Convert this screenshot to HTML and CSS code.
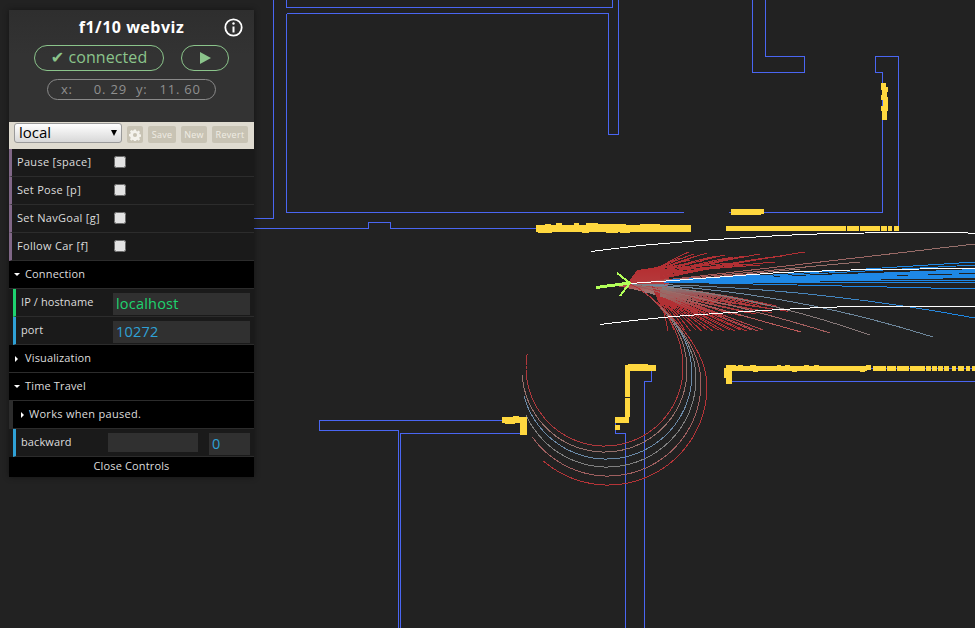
FILE: index.html
```html
<!DOCTYPE html>
<html lang="en">
<head>
<meta charset="utf-8">
<title>f1/10 webviz</title>
<link rel="stylesheet" href="styles.css">
</head>
<body>
<svg class="map" width="975" height="628" viewBox="0 0 975 628">
  <defs>
    <linearGradient id="blobFill" x1="0" y1="0" x2="0" y2="1">
      <stop offset="0" stop-color="#b52d30"/>
      <stop offset=".55" stop-color="#b53a3c"/>
      <stop offset=".8" stop-color="#a8706c"/>
      <stop offset="1" stop-color="#8a8080"/>
    </linearGradient>
  </defs>
  <g class="walls">
    <path d="M273.5 0V218.5H254"/>
    <path d="M286.5 0V7.5H612.5V0"/>
    <path d="M287 13.5H608.5V134.5H618.5V0"/>
    <path d="M286.5 14V212.5H684"/>
    <path d="M254 228.5H368.5V222.5H390.5V228.5H540"/>
    <path d="M729 212.5H882.5V72.5H875.5V56.5H898.5V229"/>
    <path d="M752.5 0V72.5H804.5V56.5H765.5V0"/>
    <path d="M505 420.5H319.5V430.5H398.5V628"/>
    <path d="M400.5 628V433.5H522"/>
    <path d="M615.5 422V433.5H625.5V628"/>
    <path d="M644.5 628V381.5H651.5V370"/>
    <path d="M730 381.5H975"/>
    <path d="M860 368.5H975"/>
  </g>
  <polygon class="blob" points="610,285 628,283 637,270 652,268 660,266 668,272 670,281 666,292 660,297 648,293 636,290 622,287"/>
  <g id="fan" class="fan"></g>
  <g class="yellow">
    <rect x="536" y="225" width="155" height="7"/>
    <rect x="538" y="232" width="14" height="1"/><rect x="545" y="224" width="6" height="1"/>
    <rect x="556" y="223" width="6" height="2"/><rect x="574" y="223" width="5" height="2"/>
    <rect x="582" y="232" width="7" height="1"/><rect x="590" y="224" width="36" height="2"/>
    <rect x="586" y="223" width="12" height="2"/><rect x="606" y="232" width="12" height="1"/>
    <rect x="620" y="232" width="10" height="1"/><rect x="640" y="224" width="20" height="1"/>
    <rect x="731" y="209" width="30" height="6"/><rect x="758" y="209" width="6" height="5"/>
    <rect x="726" y="226" width="120" height="5"/><rect x="847" y="226" width="12" height="5"/>
    <rect x="860" y="226" width="20" height="5"/><rect x="881" y="226" width="6" height="5"/>
    <rect x="888" y="226" width="4" height="5"/><rect x="894" y="226" width="5" height="5"/>
    <rect x="881" y="83" width="5" height="7"/><rect x="882" y="87" width="6" height="5"/>
    <rect x="882" y="92" width="5" height="3"/><rect x="881" y="95" width="6" height="5"/>
    <rect x="883" y="97" width="5" height="9"/><rect x="881" y="106" width="7" height="5"/>
    <rect x="882" y="111" width="5" height="9"/>
    <rect x="724" y="368" width="8" height="10"/><rect x="726" y="378" width="6" height="6"/>
    <rect x="726" y="365" width="10" height="5"/><rect x="732" y="366" width="135" height="5"/>
    <rect x="738" y="365" width="5" height="2"/><rect x="750" y="365" width="6" height="2"/>
    <rect x="753" y="371" width="5" height="1"/><rect x="777" y="365" width="4" height="2"/>
    <rect x="785" y="365" width="5" height="2"/><rect x="792" y="371" width="5" height="1"/>
    <rect x="804" y="365" width="5" height="2"/><rect x="814" y="365" width="5" height="2"/>
    <rect x="860" y="371" width="5" height="1"/><rect x="866" y="365" width="5" height="5"/>
    <rect x="873" y="366" width="13" height="5"/><rect x="887" y="366" width="9" height="5"/>
    <rect x="897" y="366" width="12" height="5"/><rect x="910" y="366" width="15" height="5"/>
    <rect x="926" y="366" width="5" height="5"/><rect x="932" y="366" width="5" height="5"/>
    <rect x="938" y="366" width="5" height="5"/><rect x="944" y="366" width="5" height="5"/>
    <rect x="952" y="366" width="4" height="5"/><rect x="958" y="366" width="6" height="5"/>
    <rect x="966" y="366" width="4" height="5"/><rect x="972" y="366" width="3" height="5"/>
    <rect x="625" y="365" width="5" height="32"/><rect x="625" y="398" width="5" height="19"/>
    <rect x="625" y="365" width="31" height="6"/><rect x="628" y="364" width="20" height="2"/>
    <rect x="615" y="417" width="14" height="6"/><rect x="615" y="425" width="5" height="5"/>
    <rect x="502" y="417" width="25" height="6"/><rect x="505" y="423" width="10" height="1"/>
    <rect x="513" y="416" width="6" height="2"/><rect x="520" y="418" width="7" height="17"/>
  </g>
  <g class="bounds">
    <polyline points="591,251.500 640,245.500 700,240.500 780,235.500 830,233.500 900,232.500 960,232.500 975,233.500"/>
    <polyline points="600,324.500 633,320.500 673,316.500 730,312.500 780,309.500 820,307.500 855,306.500 975,306.500"/>
    <polyline points="630,283.500 673,280.500 780,272.500 865,269.500 975,268.500"/>
  </g>
  <g class="arrow">
    <path class="shaft" d="M596 287.500L630 283"/>
    <path d="M617 273L630 283L620 296"/>
  </g>
</svg>

<main class="panel">
  <header class="head">
    <h1 class="title">f1/10 webviz</h1>
    <svg class="info" width="19" height="19" viewBox="0 0 19 19">
      <circle cx="9.5" cy="9.5" r="8.2"/>
      <path d="M9.5 8.5V14.5"/>
      <circle class="dot" cx="9.5" cy="5.5" r="1.2"/>
    </svg>
    <div class="pills">
      <div class="pill pill-conn">✔ connected</div>
      <div class="pill pill-play">
        <svg width="13" height="14" viewBox="0 0 13 14"><path d="M1 1L12 7L1 13Z"/></svg>
      </div>
    </div>
    <div class="coords"><span class="c-x">x:</span><span class="c-xv">0. 29</span><span class="c-y">y:</span><span class="c-yv">11. 60</span></div>
  </header>

  <div class="presets">
    <div class="select-wrap"><select class="preset-select"><option>local</option></select></div>
    <button class="btn btn-gear" aria-label="settings">
      <svg width="12" height="12" viewBox="0 0 14 14">
        <path d="M5.8 0.500h2.400l.3 1.800 1.200.5 1.500-1 1.700 1.700-1 1.500.5 1.200 1.800.3v2.400l-1.800.3-.5 1.200 1 1.500-1.700 1.700-1.500-1-1.200.5-.3 1.800H5.800l-.3-1.800-1.200-.5-1.500 1-1.700-1.700 1-1.500-.5-1.200L-.2 8.200v-2.400l1.800-.3.5-1.200-1-1.500 1.700-1.700 1.500 1 1.200-.5z"/>
        <circle class="hole" cx="7" cy="7" r="2.400"/>
      </svg>
    </button>
    <button class="btn btn-save">Save</button>
    <button class="btn btn-new">New</button>
    <button class="btn btn-revert">Revert</button>
  </div>

  <ul class="rows">
    <li class="row row-bool"><span class="label">Pause [space]</span><input class="check" type="checkbox"></li>
    <li class="row row-bool"><span class="label">Set Pose [p]</span><input class="check" type="checkbox"></li>
    <li class="row row-bool"><span class="label">Set NavGoal [g]</span><input class="check" type="checkbox"></li>
    <li class="row row-bool"><span class="label">Follow Car [f]</span><input class="check" type="checkbox"></li>
    <li class="row folder open">Connection</li>
    <li class="nested">
      <ul class="rows">
        <li class="row row-field row-green"><span class="label">IP / hostname</span><input class="field field-green" type="text" value="localhost"></li>
        <li class="row row-field row-blue"><span class="label">port</span><input class="field field-blue" type="text" value="10272"></li>
      </ul>
    </li>
    <li class="row folder">Visualization</li>
    <li class="row folder open">Time Travel</li>
    <li class="nested">
      <ul class="rows">
        <li class="row folder sub">Works when paused.</li>
        <li class="row row-field row-blue row-slider"><span class="label label-short">backward</span><span class="slider"></span><input class="field field-blue field-num" type="text" value="0"></li>
      </ul>
    </li>
  </ul>
  <div class="close">Close Controls</div>
</main>
<script src="script.js"></script>
</body>
</html>
```

FILE: styles.css
```css
* { box-sizing: border-box; }
html, body { height: 100%; }
body {
  margin: 0;
  padding: 10px 0 0 9px;
  background: #222;
  overflow: hidden;
  font-family: "Open Sans", "DejaVu Sans", sans-serif;
}
ul { list-style: none; margin: 0; padding: 0; }

.map { position: absolute; left: 0; top: 0; shape-rendering: crispEdges; }
.walls path { fill: none; stroke: #4a66f2; stroke-width: 1; }
.yellow rect { fill: #ffd83f; }
.bounds polyline { fill: none; stroke: #fff; stroke-width: 1; }
.arrow path { fill: none; stroke: #b2ff59; stroke-width: 2; }
.arrow .shaft { stroke-width: 3; }
.fan path { fill: none; }
.blob { fill: url(#blobFill); }

.panel {
  position: relative;
  width: 245px;
  box-shadow: 0 0 6px rgba(0, 0, 0, .45);
  color: #eee;
  font-size: 11px;
  letter-spacing: .3px;
}

.head {
  position: relative;
  height: 112px;
  padding-top: 6px;
  background: linear-gradient(#2e2e2e, #333 40%);
  display: flex;
  flex-direction: column;
  align-items: center;
}
.title {
  margin: 0;
  height: 23px;
  line-height: 23px;
  font-size: 16px;
  font-weight: 700;
  letter-spacing: .5px;
  color: #fff;
}
.info { position: absolute; left: 215px; top: 8px; }
.info circle { fill: none; stroke: #fff; stroke-width: 1.8; shape-rendering: geometricPrecision; }
.info path { stroke: #fff; stroke-width: 2; fill: none; }
.info .dot { fill: #fff; stroke: none; }

.pills { display: flex; gap: 17px; margin-top: 6px; }
.pill {
  height: 26px;
  border: 1px solid #8bc48b;
  border-radius: 13px;
  display: flex;
  align-items: center;
  justify-content: center;
  color: #8bc48b;
}
.pill-conn { width: 130px; font-size: 16px; letter-spacing: .1px; padding-bottom: 2px; }
.pill-play { width: 48px; }
.pill-play path { fill: #8bc48b; shape-rendering: geometricPrecision; }

.coords {
  width: 169px;
  height: 21px;
  margin-top: 8px;
  border: 1px solid #8a8a8a;
  border-radius: 11px;
  color: #8f8f8f;
  font-size: 13px;
  letter-spacing: .8px;
  line-height: 19px;
  display: flex;
  white-space: pre;
}
.c-x { margin-left: 13px; }
.c-xv { margin-left: 21px; }
.c-y { margin-left: 9px; }
.c-yv { margin-left: 12px; }

.presets {
  height: 27px;
  background: #dfdbd0;
  padding: 1px 5px 0;
  display: flex;
  align-items: flex-start;
}
.select-wrap { position: relative; width: 108px; height: 20px; }
.select-wrap::after {
  content: "";
  position: absolute;
  right: 5px;
  top: 7px;
  border-style: solid;
  border-color: #000 transparent transparent transparent;
  border-width: 6px 3.5px 0 3.5px;
}
.preset-select {
  appearance: none;
  display: block;
  width: 100%;
  height: 100%;
  border: 1px solid #9a9a9a;
  border-radius: 3px;
  background: linear-gradient(#fff, #d8d8d8);
  font-family: "Open Sans", "DejaVu Sans", sans-serif;
  font-size: 15px;
  line-height: 16px;
  color: #000;
  padding: 0 0 2px 4px;
}
.btn {
  height: 17px;
  margin-top: 3px;
  padding: 0;
  border: 0;
  border-radius: 2px;
  background: #c8c3b4;
  color: #f0ede4;
  font-family: inherit;
  font-size: 9px;
  letter-spacing: .3px;
  display: flex;
  align-items: center;
  justify-content: center;
}
.btn-gear { width: 16px; margin-left: 5px; }
.btn-gear path { fill: #f4f2ec; shape-rendering: geometricPrecision; }
.btn-gear .hole { fill: #c8c3b4; shape-rendering: geometricPrecision; }
.btn-save { width: 28px; margin-left: 5px; }
.btn-new { width: 26px; margin-left: 5px; }
.btn-revert { width: 36px; margin-left: 5px; }

.row {
  height: 28px;
  background: #1a1a1a;
  border-bottom: 1px solid #2c2c2c;
  display: flex;
  align-items: center;
  color: #ddd;
}
.row-bool { border-left: 3px solid #806787; padding: 0 0 2px 5px; }
.row-bool .label { width: 97px; white-space: nowrap; }
.check { width: 12px; height: 12px; margin: 1px 0 0; opacity: .88; }

.folder {
  background: #000;
  position: relative;
  padding: 0 0 2px 16px;
  border-bottom: 1px solid #2c2c2c;
  letter-spacing: .15px;
}
.folder::before {
  content: "";
  position: absolute;
  left: 6px;
  top: 11px;
  border-style: solid;
  border-color: transparent transparent transparent #fff;
  border-width: 3px 0 3px 3px;
}
.folder.open::before {
  left: 5px;
  top: 12px;
  border-color: #fff transparent transparent transparent;
  border-width: 3px 3px 0 3px;
}

.nested { padding-left: 4px; background: #1a1a1a; }
.nested .sub { margin-left: -4px; padding-left: 16px; border-left: 4px solid #2c2c2c; letter-spacing: .3px; }
.nested .sub::before { left: 8px; }

.row-field { border-left: 3px solid #2fa1d6; padding: 0 4px 0 5px; }
.row-green { border-left-color: #1ed36f; }
.row-field .label { width: 92px; flex: none; white-space: nowrap; position: relative; top: -1px; letter-spacing: .1px; }
.row-field .label-short { width: 87px; }
.field {
  flex: none;
  width: 137px;
  height: 22px;
  margin-top: 3px;
  border: 0;
  padding: 0 3px 2px;
  background: #303030;
  font-family: inherit;
  font-size: 14.500px;
  letter-spacing: .2px;
  outline: none;
}
.field-green { color: #1ed36f; }
.field-blue { color: #2fa1d6; }
.slider { width: 90px; height: 19px; background: #303030; flex: none; }
.field-num { width: 41px; margin-left: 11px; }

.close {
  height: 20px;
  background: #000;
  color: #ddd;
  text-align: center;
  line-height: 18px;
  letter-spacing: .15px;
}
```

FILE: script.js
```js
(function () {
  var NS = "http://www.w3.org/2000/svg";
  var fan = document.getElementById("fan");
  var O = [630, 284];
  var RED = [178, 48, 52], BROWN = [150, 112, 108], GRAY = [128, 128, 128],
      STEEL = [107, 138, 168], BLUE = [30, 136, 229];

  function mix(a, b, t) {
    return "rgb(" + a.map(function (v, i) { return Math.round(v + (b[i] - v) * t); }).join(",") + ")";
  }
  function add(d, color, w) {
    var p = document.createElementNS(NS, "path");
    p.setAttribute("d", d);
    p.setAttribute("stroke", color);
    p.setAttribute("stroke-width", w || 1);
    fan.appendChild(p);
  }
  // Parabola from start S (the car by default), initial slope a, ending at (x, y),
  // with the colour shifting from c0 to c1 along its length.
  function traj(x, y, a, c0, c1, w, S) {
    S = S || O;
    var dx = x - S[0], cx = S[0] + dx / 2, cy = S[1] + a * dx / 2, n = 10, prev = S;
    for (var i = 1; i <= n; i++) {
      var t = i / n, u = 1 - t;
      var px = u * u * S[0] + 2 * u * t * cx + t * t * x;
      var py = u * u * S[1] + 2 * u * t * cy + t * t * y;
      add("M" + prev[0].toFixed(1) + " " + prev[1].toFixed(1) + "L" + px.toFixed(1) + " " + py.toFixed(1), mix(c0, c1, t), w);
      prev = [px, py];
    }
  }
  var i;

  // Upper fan: red lines leaving the top of the blob.
  var upper = [[689,252],[694,254],[700,255],[707,253],[716,256],[725,255],[733,257],[745,256],[760,254],[772,257],[782,256],[805,252],
               [680,258],[690,260],[702,261],[715,263],[730,263],[745,264],[760,265],[775,262]];
  upper.forEach(function (e, n) {
    var s = [660, 267 + (n % 12) * 1.1];
    traj(e[0], e[1], (e[1] - s[1]) / (e[0] - s[0]) * 1.2, RED, RED, 1, s);
  });
  traj(975, 244, -.115, [170, 80, 80], BROWN, 1);
  traj(860, 262, -.1, [170, 80, 80], BROWN, 1);
  traj(800, 269, -.08, RED, BROWN, 1);

  // Lower fan: nearly parallel lines ending along y~330.
  for (i = 0; i < 18; i++) {
    var s1 = [652 + (17 - i) * .4, 302 - i * .9];
    traj(668 + i * 5.6, 331 - (i % 2), .62 - i * .012, RED, i > 14 ? [175, 70, 75] : RED, 1, s1);
  }
  for (i = 0; i < 12; i++) {
    traj(700 + i * 8, 317 - i * .7 + (i % 2) * 2, .3 - i * .01, BROWN, RED, 1, [660, 296 - i * .6]);
  }
  for (i = 0; i < 9; i++) {
    traj(705 + i * 9, 303 + i * .4, .16 - i * .006, GRAY, RED, 1, [662, 289 - i * .3]);
  }

  // Long lines sweeping to the right.
  traj(801, 332, .28, [150, 95, 95], [190, 90, 90]);
  traj(830, 333, .18, BROWN, [165, 95, 95]);
  traj(870, 335, .0734, GRAY, [135, 120, 120]);
  traj(933, 337, .0346, STEEL, [110, 135, 155]);
  traj(975, 318, .011, GRAY, BLUE);

  var START = [664, 282];
  [[262, 1], [265, 1], [270, 2], [272, 2], [275, 2], [277, 2], [280, 1], [283, 1], [289, 1]].forEach(function (l) {
    var dy = l[0] - START[1];
    traj(975, l[0], dy / 311, BLUE, BLUE, l[1], START);
  });
  traj(757, 276, -.06, BLUE, BLUE, 3, [672, 281]);

  // Hard-lock spirals that come round underneath the car.
  [
    [604.5, 367.5, 78.5, 526, 353, [176, 56, 60]],
    [604.5, 369.5, 82.5, 522, 372, [150, 112, 108]],
    [606.5, 373.5, 85.5, 521, 393, [107, 138, 168]],
    [607, 378, 89, 523, 415, [128, 128, 128]],
    [608, 383, 93, 529, 437, [160, 96, 96]],
    [608, 386, 99, 541, 460, [182, 52, 56]]
  ].forEach(function (s) {
    var cx = s[0], cy = s[1], r = s[2], end = Math.atan2(s[4] - cy, s[3] - cx);
    if (end < 0) end += 2 * Math.PI;
    var x1 = cx + r, d = "M" + O[0] + " " + O[1] + "C" + (O[0] + 20) + " " + (O[1] + 8) + " " + x1 + " " + (cy - 45) + " " + x1 + " " + cy;
    for (var a = .04; a <= end; a += .04) {
      d += "L" + (cx + r * Math.cos(a)).toFixed(1) + " " + (cy + r * Math.sin(a)).toFixed(1);
    }
    add(d, "rgb(" + s[5].join(",") + ")");
  });
})();
```
